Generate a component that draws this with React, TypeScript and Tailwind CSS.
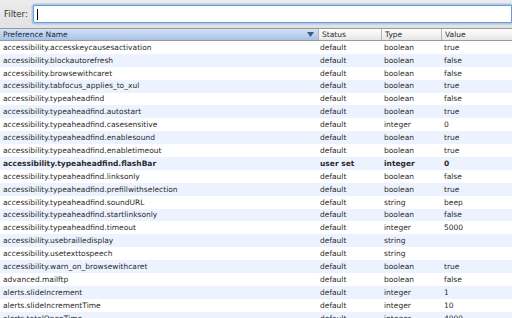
const rows: [string, string, string, string][] = [
  ["accessibility.accesskeycausesactivation", "default", "boolean", "true"],
  ["accessibility.blockautorefresh", "default", "boolean", "false"],
  ["accessibility.browsewithcaret", "default", "boolean", "false"],
  ["accessibility.tabfocus_applies_to_xul", "default", "boolean", "true"],
  ["accessibility.typeaheadfind", "default", "boolean", "false"],
  ["accessibility.typeaheadfind.autostart", "default", "boolean", "true"],
  ["accessibility.typeaheadfind.casesensitive", "default", "integer", "0"],
  ["accessibility.typeaheadfind.enablesound", "default", "boolean", "true"],
  ["accessibility.typeaheadfind.enabletimeout", "default", "boolean", "true"],
  ["accessibility.typeaheadfind.flashBar", "user set", "integer", "0"],
  ["accessibility.typeaheadfind.linksonly", "default", "boolean", "false"],
  ["accessibility.typeaheadfind.prefillwithselection", "default", "boolean", "true"],
  ["accessibility.typeaheadfind.soundURL", "default", "string", "beep"],
  ["accessibility.typeaheadfind.startlinksonly", "default", "boolean", "false"],
  ["accessibility.typeaheadfind.timeout", "default", "integer", "5000"],
  ["accessibility.usebrailledisplay", "default", "string", ""],
  ["accessibility.usetexttospeech", "default", "string", ""],
  ["accessibility.warn_on_browsewithcaret", "default", "boolean", "true"],
  ["advanced.mailftp", "default", "boolean", "false"],
  ["alerts.slideIncrement", "default", "integer", "1"],
  ["alerts.slideIncrementTime", "default", "integer", "10"],
  ["alerts.totalOpenTime", "default", "integer", "4000"],
];

export default function App() {
  return (
    <div className="h-[318px] w-[512px] overflow-hidden bg-white font-['DejaVu_Sans',Verdana,sans-serif] text-[7.5px] text-[#2a2a2a]">
      {/* filter bar */}
      <div className="flex h-[28px] items-center bg-gradient-to-b from-[#ececec] to-[#e2e2e2] pl-[4px]">
        <span className="w-[29px] text-[8.5px] text-[#333]">Filter:</span>
        <div className="flex h-[18px] flex-1 items-center rounded-l-[2px] border border-[#6f9bd4] bg-white pl-[3px] shadow-[0_0_0_1.5px_#a9c6ec]">
          <span className="h-[11px] w-px bg-black" />
        </div>
      </div>

      {/* header */}
      <div className="flex h-[13px] border-y border-[#9a9a9a] leading-[11px]">
        <div className="flex w-[318px] items-center bg-gradient-to-b from-[#d3e2f6] to-[#a8c2e6] pl-[3px] text-[#1a2a40]">
          <span className="flex-1">Preference Name</span>
          <svg width="7" height="5" viewBox="0 0 7 5" className="mr-[4px]">
            <path d="M0 0h7L3.5 5z" fill="#3c5a80" />
          </svg>
        </div>
        <div className="flex w-[63px] items-center border-l border-[#b4b4b4] bg-gradient-to-b from-white to-[#e6e6e6] pl-[3px]">Status</div>
        <div className="flex w-[60px] items-center border-l border-[#b4b4b4] bg-gradient-to-b from-white to-[#e6e6e6] pl-[3px]">Type</div>
        <div className="flex flex-1 items-center border-l border-[#b4b4b4] bg-gradient-to-b from-white to-[#e6e6e6] pl-[3px]">Value</div>
      </div>

      {/* rows */}
      <div>
        {rows.map(([name, status, type, value], i) => (
          <div
            key={name}
            className={`flex h-[12.9px] items-center ${i % 2 === 1 ? "bg-[#edf3fe]" : "bg-white"} ${status === "user set" ? "font-bold" : ""}`}
          >
            <span className="w-[318px] pl-[3px]">{name}</span>
            <span className="w-[64px] pl-[2px]">{status}</span>
            <span className="w-[60px] pl-[2px]">{type}</span>
            <span className="flex-1 pl-[2px]">{value}</span>
          </div>
        ))}
      </div>
    </div>
  );
}
